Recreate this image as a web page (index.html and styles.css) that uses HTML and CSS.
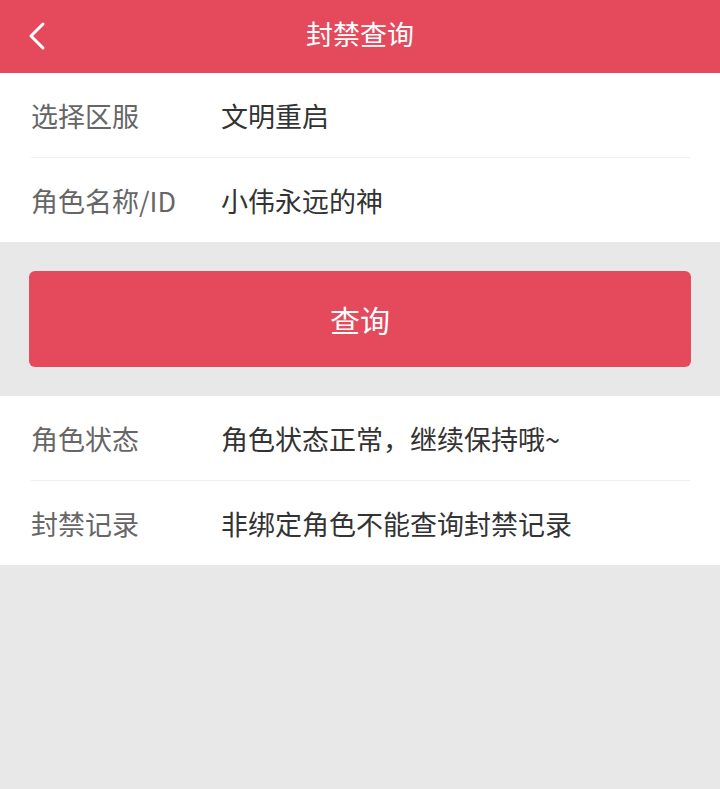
FILE: index.html
```html
<!DOCTYPE html>
<html lang="zh-CN">
<head>
<meta charset="utf-8">
<title>封禁查询</title>
<link rel="stylesheet" href="styles.css">
</head>
<body>
<div class="page">
  <header class="topbar">
    <span class="back">
      <svg width="20" height="30" viewBox="0 0 20 30"><polyline points="15,3 3,15 15,27" fill="none" stroke="#fff" stroke-width="3" stroke-linecap="round" stroke-linejoin="round"/></svg>
    </span>
    <h1 class="title">封禁查询</h1>
  </header>
  <section class="group">
    <div class="row"><span class="label">选择区服</span><span class="value">文明重启</span></div>
    <div class="row"><span class="label">角色名称/ID</span><span class="value">小伟永远的神</span></div>
  </section>
  <div class="action">
    <button class="btn">查询</button>
  </div>
  <section class="group">
    <div class="row"><span class="label">角色状态</span><span class="value">角色状态正常，继续保持哦~</span></div>
    <div class="row"><span class="label">封禁记录</span><span class="value">非绑定角色不能查询封禁记录</span></div>
  </section>
</div>
</body>
</html>
```
FILE: styles.css
```css
* { box-sizing: border-box; }
html, body { margin: 0; padding: 0; }
body {
  background: #e8e8e8;
  font-family: "Noto Sans CJK SC", "Noto Sans", sans-serif;
  width: 720px;
  height: 789px;
  overflow: hidden;
}
.topbar {
  height: 73px;
  background: #e44a5c;
  display: flex;
  align-items: center;
  justify-content: center;
  position: relative;
}
.back {
  position: absolute;
  left: 28px;
  top: 21px;
  display: flex;
}
.title {
  margin: 0 0 6px;
  color: #fff;
  font-size: 27px;
  font-weight: normal;
  line-height: 1;
}
.group {
  background: #fff;
  padding: 0 30px 0 31px;
}
.row {
  height: 84px;
  display: flex;
  align-items: center;
  font-size: 27px;
}
.row + .row {
  border-top: 1px solid #f0f0f0;
  height: 85px;
}
.label {
  width: 190px;
  color: #666;
}
.value {
  color: #333;
}
.action {
  padding: 29px 29px;
}
.btn {
  display: block;
  width: 100%;
  height: 96px;
  border: none;
  border-radius: 6px;
  background: #e44a5c;
  color: #fff;
  font-family: inherit;
  font-size: 30px;
  padding: 0;
}
```
